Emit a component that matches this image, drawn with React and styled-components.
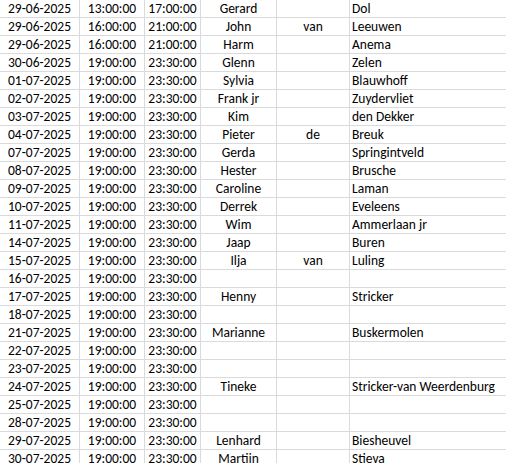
import React from "react";
import styled, { createGlobalStyle } from "styled-components";

const Global = createGlobalStyle`
  html, body { margin: 0; padding: 0; background: #fff; }
  body { overflow: hidden; }
`;

const Sheet = styled.div`
  width: 506px;
  height: 463px;
  overflow: hidden;
  background: #fff;
  font-family: Carlito, Lato, "Liberation Sans", sans-serif;
  font-size: 13.5px;
  color: #000;
`;

const Row = styled.div`
  display: grid;
  grid-template-columns: 80px 65px 56px 76px 73px 1fr;
  height: 18px;
  box-sizing: border-box;
  border-bottom: 1px solid #dadada;
`;

const Cell = styled.div`
  box-sizing: border-box;
  height: 17px;
  line-height: 17px;
  white-space: nowrap;
  overflow: visible;
  border-right: ${(p) => (p.$last ? "none" : "1px solid #dadada")};
  text-align: ${(p) => p.$align || "center"};
  padding-left: ${(p) => (p.$align === "left" ? "2px" : "0")};
`;

const rows = [
  ["29-06-2025", "13:00:00", "17:00:00", "Gerard", "", "Dol"],
  ["29-06-2025", "16:00:00", "21:00:00", "John", "van", "Leeuwen"],
  ["29-06-2025", "16:00:00", "21:00:00", "Harm", "", "Anema"],
  ["30-06-2025", "19:00:00", "23:30:00", "Glenn", "", "Zelen"],
  ["01-07-2025", "19:00:00", "23:30:00", "Sylvia", "", "Blauwhoff"],
  ["02-07-2025", "19:00:00", "23:30:00", "Frank jr", "", "Zuydervliet"],
  ["03-07-2025", "19:00:00", "23:30:00", "Kim", "", "den Dekker"],
  ["04-07-2025", "19:00:00", "23:30:00", "Pieter", "de", "Breuk"],
  ["07-07-2025", "19:00:00", "23:30:00", "Gerda", "", "Springintveld"],
  ["08-07-2025", "19:00:00", "23:30:00", "Hester", "", "Brusche"],
  ["09-07-2025", "19:00:00", "23:30:00", "Caroline", "", "Laman"],
  ["10-07-2025", "19:00:00", "23:30:00", "Derrek", "", "Eveleens"],
  ["11-07-2025", "19:00:00", "23:30:00", "Wim", "", "Ammerlaan jr"],
  ["14-07-2025", "19:00:00", "23:30:00", "Jaap", "", "Buren"],
  ["15-07-2025", "19:00:00", "23:30:00", "Ilja", "van", "Luling"],
  ["16-07-2025", "19:00:00", "23:30:00", "", "", ""],
  ["17-07-2025", "19:00:00", "23:30:00", "Henny", "", "Stricker"],
  ["18-07-2025", "19:00:00", "23:30:00", "", "", ""],
  ["21-07-2025", "19:00:00", "23:30:00", "Marianne", "", "Buskermolen"],
  ["22-07-2025", "19:00:00", "23:30:00", "", "", ""],
  ["23-07-2025", "19:00:00", "23:30:00", "", "", ""],
  ["24-07-2025", "19:00:00", "23:30:00", "Tineke", "", "Stricker-van Weerdenburg"],
  ["25-07-2025", "19:00:00", "23:30:00", "", "", ""],
  ["28-07-2025", "19:00:00", "23:30:00", "", "", ""],
  ["29-07-2025", "19:00:00", "23:30:00", "Lenhard", "", "Biesheuvel"],
  ["30-07-2025", "19:00:00", "23:30:00", "Martijn", "", "Stieva"],
];

export default function App() {
  return (
    <Sheet>
      <Global />
      {rows.map((r, i) => (
        <Row key={i}>
          <Cell>{r[0]}</Cell>
          <Cell>{r[1]}</Cell>
          <Cell>{r[2]}</Cell>
          <Cell>{r[3]}</Cell>
          <Cell>{r[4]}</Cell>
          <Cell $align="left" $last>{r[5]}</Cell>
        </Row>
      ))}
    </Sheet>
  );
}
